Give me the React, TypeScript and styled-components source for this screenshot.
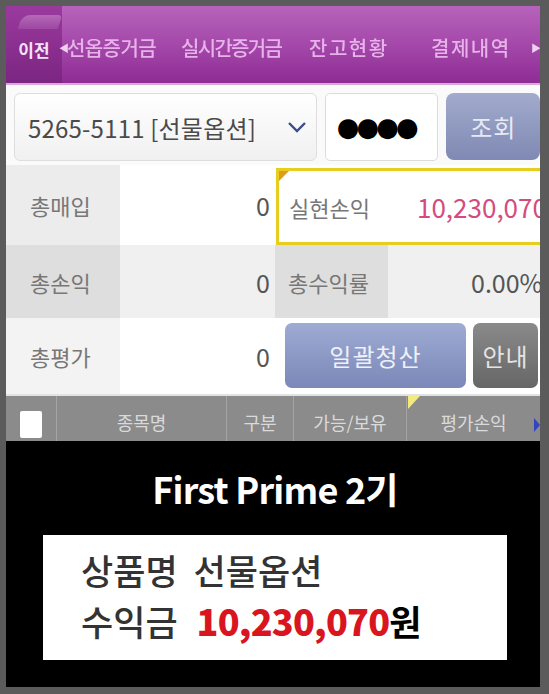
import * as React from "react";
import styled, { createGlobalStyle } from "styled-components";

const GlobalStyle = createGlobalStyle`
	html, body {
		margin: 0;
		padding: 0;
		background: #5b5b5b;
	}
	* {
		box-sizing: border-box;
	}
`;

const KR = `"Noto Sans CJK KR", "Noto Sans", sans-serif`;

const Frame = styled.div`
	width: 549px;
	height: 694px;
	padding: 6px 9px 7px 6px;
	background: #5b5b5b;
	display: flex;
	flex-direction: column;
	font-family: ${KR};
`;

const Screen = styled.div`
	display: flex;
	flex-direction: column;
	background: #fff;
	overflow: hidden;
`;

/* ---------- top nav ---------- */

const NavBar = styled.div`
	height: 79px;
	display: flex;
	align-items: center;
	padding-top: 6px;
	background: linear-gradient(#b763bb 0%, #a448aa 50%, #8e2c94 100%);
	border-bottom: 2px solid #d9a9dc;
	color: #e6b2e8;
	font-size: 20px;
	font-weight: 500;
	overflow: hidden;
`;

const PrevTab = styled.div`
	position: relative;
	width: 56px;
	height: calc(100% + 6px);
	margin-top: -6px;
	display: flex;
	align-items: center;
	justify-content: center;
	padding-top: 9px;
	background: linear-gradient(#9a3a9e, #7c2582);
	color: #f6e2f6;
	font-size: 17px;
	font-weight: 700;

	&::before {
		content: "";
		position: absolute;
		left: 14px;
		top: 9px;
		width: 40px;
		height: 14px;
		border-radius: 8px 4px 0 0;
		background: linear-gradient(#c27ec6, #a150a6);
		transform: skewX(-18deg);
		opacity: 0.7;
	}
`;

const Arrow = styled.span<{ $w: number; $ml?: number }>`
	width: ${(p) => p.$w}px;
	flex: none;
	margin-left: ${(p) => p.$ml ?? 0}px;
	font-size: 10px;
	color: #f0d0f0;
	white-space: nowrap;
	filter: blur(0.3px);
`;

const NavItem = styled.div<{ $w: number; $ls?: number }>`
	width: ${(p) => p.$w}px;
	flex: none;
	white-space: nowrap;
	letter-spacing: ${(p) => p.$ls ?? 0}px;
	filter: blur(0.35px);
`;

/* ---------- search row ---------- */

const SearchRow = styled.div`
	height: 80px;
	display: flex;
	align-items: flex-start;
	gap: 8px;
	padding: 8px 0 0 8px;
	background: #fafafa;
`;

const Select = styled.div`
	width: 304px;
	height: 68px;
	display: flex;
	align-items: center;
	justify-content: space-between;
	padding: 0 9px 0 13px;
	border: 1px solid #dedede;
	border-radius: 6px;
	background: linear-gradient(#ffffff, #f0f0f0);
	color: #4a4a4a;
	font-size: 24px;
	letter-spacing: 0.2px;
	white-space: nowrap;
`;

const Password = styled.div`
	width: 114px;
	height: 68px;
	display: flex;
	align-items: center;
	padding-left: 11px;
	border: 1px solid #dcdcdc;
	border-radius: 5px;
	background: #fff;
	color: #000;
	font-family: "DejaVu Sans", sans-serif;
	font-size: 26px;
	letter-spacing: -3px;
`;

const QueryButton = styled.div`
	width: 94px;
	height: 67px;
	display: flex;
	align-items: center;
	justify-content: center;
	border-radius: 8px;
	background: linear-gradient(#a2abcd, #7f89b3);
	color: #e8eaf3;
	font-size: 24px;
	letter-spacing: 1px;
`;

/* ---------- info rows ---------- */

const InfoRow = styled.div<{ $h: number; $label: string; $value: string }>`
	height: ${(p) => p.$h}px;
	display: grid;
	grid-template-columns: 114px 155px 113px 152px;
	background: ${(p) => p.$value};

	& > .label {
		background: ${(p) => p.$label};
	}
`;

const Label = styled.div<{ $pad?: number }>`
	display: flex;
	align-items: center;
	padding-left: ${(p) => p.$pad ?? 24}px;
	color: #777;
	font-size: 22px;
	white-space: nowrap;
`;

const Value = styled.div`
	display: flex;
	align-items: center;
	justify-content: flex-end;
	padding-right: 5px;
	color: #555;
	font-size: 25px;
	white-space: nowrap;
	overflow: hidden;
`;

const ClippedValue = styled.div<{ $pad: number }>`
	display: flex;
	align-items: center;
	padding-left: ${(p) => p.$pad}px;
	color: #555;
	font-size: 25px;
	white-space: nowrap;
	overflow: hidden;
`;

const Highlight = styled.div`
	position: relative;
	grid-column: 3 / 5;
	margin: 3px 0 0 1px;
	display: grid;
	grid-template-columns: 109px 1fr;
	border: 3px solid #e6ce1d;
	border-right: none;

	&::before {
		content: "";
		position: absolute;
		left: 0;
		top: 0;
		border-top: 10px solid #e09a1e;
		border-right: 10px solid transparent;
	}
`;

const HighlightValue = styled.div`
	display: flex;
	align-items: center;
	padding-left: 29px;
	background: #fff;
	color: #d54b7e;
	font-size: 26px;
	white-space: nowrap;
	overflow: hidden;
`;

const Buttons = styled.div`
	grid-column: 3 / 5;
	display: flex;
	align-items: center;
	gap: 7px;
	padding: 0 2px 2px 10px;
`;

const ActionButton = styled.div<{ $w: number; $dark?: boolean }>`
	width: ${(p) => p.$w}px;
	height: 65px;
	display: flex;
	align-items: center;
	justify-content: center;
	border-radius: 7px;
	background: ${(p) =>
		p.$dark ? "linear-gradient(#8a8a8a, #666)" : "linear-gradient(#9eabd3, #7b88b8)"};
	color: ${(p) => (p.$dark ? "#e4e4e4" : "#eef0f8")};
	font-size: 24px;
	letter-spacing: 1px;
`;

/* ---------- table header ---------- */

const Header = styled.div`
	height: 47px;
	display: grid;
	grid-template-columns: 50px 170px 67px 113px 134px;
	border-top: 2px solid #e2e2e2;
	background: #8b8b8b;
	color: #dadada;
	font-size: 18px;
`;

const HeadCell = styled.div<{ $first?: boolean }>`
	position: relative;
	display: flex;
	align-items: center;
	justify-content: center;
	padding-top: 6px;
	border-left: ${(p) => (p.$first ? "none" : "1px solid #a4a4a4")};
	white-space: nowrap;
`;

const CheckBox = styled.div`
	width: 22px;
	height: 27px;
	margin-top: 6px;
	background: #fff;
	border-radius: 2px;
`;

const YellowFlag = styled.span`
	position: absolute;
	left: 1px;
	top: 0;
	border-top: 13px solid #f2ea7a;
	border-right: 12px solid transparent;
`;

const BlueFlag = styled.span`
	position: absolute;
	right: 0;
	top: 22px;
	border-top: 7px solid transparent;
	border-bottom: 7px solid transparent;
	border-left: 6px solid #3344c0;
`;

/* ---------- bottom result ---------- */

const Result = styled.div`
	flex: 1;
	display: flex;
	flex-direction: column;
	align-items: flex-start;
	background: #000;
`;

const Title = styled.div`
	align-self: center;
	margin: 23px 0 0 4px;
	color: #fff;
	font-size: 36px;
	font-weight: 700;
	letter-spacing: -0.8px;
	line-height: 48px;
`;

const Card = styled.div`
	width: 464px;
	height: 125px;
	margin: 23px 0 0 37px;
	padding: 9px 0 0 38px;
	background: #fff;
	display: flex;
	flex-direction: column;
	color: #333;
	font-size: 35px;
	font-weight: 500;
	line-height: 51px;
`;

const Line = styled.div<{ $gap: number }>`
	display: flex;
	align-items: baseline;
	gap: ${(p) => p.$gap}px;
	white-space: nowrap;
`;

const Amount = styled.span`
	color: #000;
	font-weight: 700;

	& > b {
		color: #d9161f;
		font-size: 36px;
		letter-spacing: -0.8px;
	}
`;

export default function App() {
	return (
		<>
			<GlobalStyle />
			<Frame>
				<Screen>
					<NavBar>
						<PrevTab>이전</PrevTab>
						<Arrow $w={8} $ml={-3}>◀</Arrow>
						<NavItem $w={114} $ls={-0.6}>선옵증거금</NavItem>
						<NavItem $w={128} $ls={-1.7}>실시간증거금</NavItem>
						<NavItem $w={122} $ls={1.5}>잔고현황</NavItem>
						<NavItem $w={100} $ls={1.5}>결제내역</NavItem>
						<Arrow $w={8}>▶</Arrow>
					</NavBar>

					<SearchRow>
						<Select>
							<span>5265-5111 [선물옵션]</span>
							<svg width="20" height="12" viewBox="0 0 20 12">
								<path d="M2 2 L10 10 L18 2" fill="none" stroke="#3c4b8c" strokeWidth="2.4" />
							</svg>
						</Select>
						<Password>●●●●</Password>
						<QueryButton>조회</QueryButton>
					</SearchRow>

					<InfoRow $h={80} $label="#ececec" $value="#fff">
						<Label className="label">총매입</Label>
						<Value>0</Value>
						<Highlight>
							<Label className="label" $pad={10}>
								실현손익
							</Label>
							<HighlightValue>10,230,070</HighlightValue>
						</Highlight>
					</InfoRow>

					<InfoRow $h={73} $label="#dedede" $value="#f0f0f0">
						<Label className="label">총손익</Label>
						<Value>0</Value>
						<Label className="label" $pad={13}>
							총수익률
						</Label>
						<ClippedValue $pad={83}>0.00%</ClippedValue>
					</InfoRow>

					<InfoRow $h={76} $label="#f3f3f3" $value="#fff">
						<Label className="label">총평가</Label>
						<Value>0</Value>
						<Buttons>
							<ActionButton $w={181}>일괄청산</ActionButton>
							<ActionButton $w={65} $dark>
								안내
							</ActionButton>
						</Buttons>
					</InfoRow>

					<Header>
						<HeadCell $first>
							<CheckBox />
						</HeadCell>
						<HeadCell>종목명</HeadCell>
						<HeadCell>구분</HeadCell>
						<HeadCell>가능/보유</HeadCell>
						<HeadCell>
							<YellowFlag />
							평가손익
							<BlueFlag />
						</HeadCell>
					</Header>
				</Screen>

				<Result>
					<Title>First Prime 2기</Title>
					<Card>
						<Line $gap={16}>
							<span>상품명</span>
							<span>선물옵션</span>
						</Line>
						<Line $gap={19}>
							<span>수익금</span>
							<Amount>
								<b>10,230,070</b>원
							</Amount>
						</Line>
					</Card>
				</Result>
			</Frame>
		</>
	);
}
